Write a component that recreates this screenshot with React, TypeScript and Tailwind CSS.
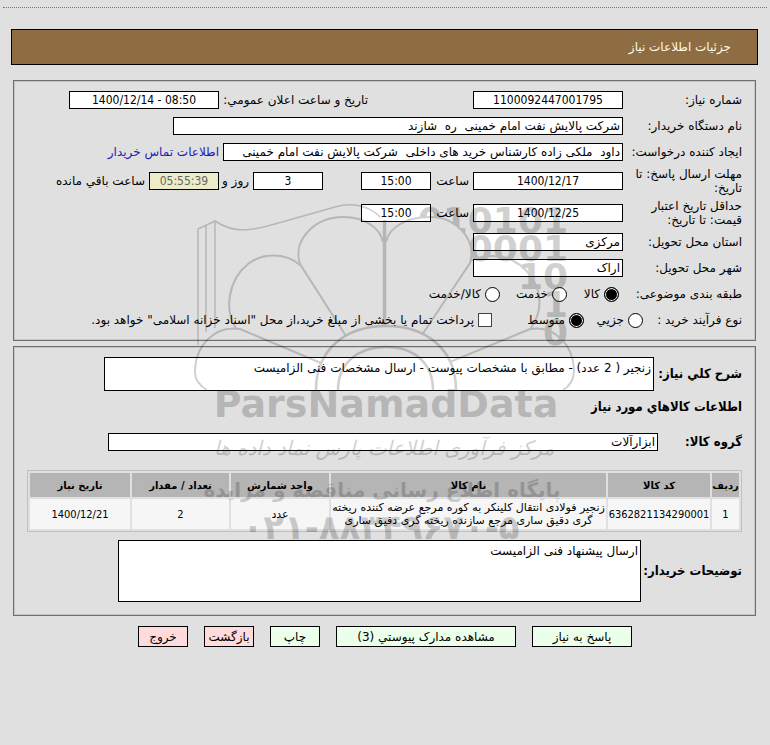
import type { InputHTMLAttributes, ReactNode } from 'react';

const columns = [
  { label: 'ردیف', width: 'w-[27px]' },
  { label: 'کد کالا', width: 'w-[102px]' },
  { label: 'نام کالا', width: '' },
  { label: 'واحد شمارش', width: 'w-[98px]' },
  { label: 'تعداد / مقدار', width: 'w-[97px]' },
  { label: 'تاریخ نیاز', width: 'w-[100px]' },
];

const items = [
  [
    '1',
    '6362821134290001',
    'زنجیر فولادی انتقال کلینکر به کوره مرجع عرضه کننده ریخته گری دقیق ساری مرجع سازنده ریخته گری دقیق ساری',
    'عدد',
    '2',
    '1400/12/21',
  ],
];

const actions = [
  { label: 'پاسخ به نیاز', style: 'w-[100px] bg-[#ebffeb]' },
  { label: 'مشاهده مدارک پیوستي (3)', style: 'w-[180px] bg-[#ebffeb]' },
  { label: 'چاپ', style: 'w-[50px] bg-[#ebffeb]' },
  { label: 'بازگشت', style: 'w-[50px] bg-[#ffdbdb]' },
  { label: 'خروج', style: 'w-[50px] bg-[#ffdbdb]' },
];

const panel = 'ms-[14px] me-[13px] border border-[#6e6e6e] px-[13px] pt-[10px] shadow-[inset_0_0_0_1px_#c6c6c6]';
const strong = "font-['DejaVu_Sans_Condensed','DejaVu_Sans',sans-serif] text-[13px] leading-[14px] font-bold whitespace-nowrap";

function Field({ className = '', ...props }: InputHTMLAttributes<HTMLInputElement>) {
  return (
    <input
      readOnly
      className={`h-[18px] shrink-0 border border-black px-0.5 ${className}`}
      {...props}
    />
  );
}

// Numbers and dates: centred, in the narrower cut
function NumberField({ className = 'w-[70px] bg-white', ...props }: InputHTMLAttributes<HTMLInputElement>) {
  return (
    <Field
      dir="ltr"
      className={`text-center font-['DejaVu_Sans_Condensed','DejaVu_Sans',sans-serif] ${className}`}
      {...props}
    />
  );
}

function Row({ id, label, children, className = 'h-[18px]' }: { id: string; label: string; children: ReactNode; className?: string }) {
  return (
    <div className={`flex items-center ${className}`}>
      <label htmlFor={id} className="w-[119px] shrink-0">{label}</label>
      {children}
    </div>
  );
}

function Radio({ name, label, checked, className }: { name: string; label: string; checked?: boolean; className: string }) {
  return (
    <label className={`flex shrink-0 items-center gap-1 whitespace-nowrap ${className}`}>
      <input
        type="radio"
        name={name}
        defaultChecked={checked}
        className="size-[15px] shrink-0 appearance-none rounded-full border border-black bg-white checked:bg-black checked:shadow-[inset_0_0_0_1px_white]"
      />
      {label}
    </label>
  );
}

function Watermark() {
  return (
    <svg
      viewBox="190 200 390 350"
      className="pointer-events-none absolute top-[200px] left-1/2 h-[350px] w-[390px] -translate-x-1/2 opacity-[0.18]"
      direction="ltr"
      aria-hidden="true"
    >
      <clipPath id="behindPetals">
        <path d="M380 200H580V350H520V285L478 262L470 261C477 238 455 217 430 217C412 217 397 223 390 232L380 225Z" />
      </clipPath>
      <g fill="none" stroke="#000" strokeWidth="2">
        <path d="M198 345V229L215 221M206 332V225M215 328V221C235 234 250 231 275 224L335 207C352 202 370 206 380 217" strokeWidth="1.5" />
        <path d="M346 336L300 264C292 240 315 217 343 217C365 217 380 228 383 242" />
        <path d="M422 335L470 263C477 238 455 217 430 217C405 217 389 228 386 242" />
        <path d="M384.500 220V326" strokeWidth="3.500" />
        <path d="M300 265C285 252 262 253 248 264C228 280 224 310 236 328" />
        <path d="M470 261C495 250 517 258 530 275C543 292 542 312 531 328" />
        <path d="M321 363L240 329C215 325 196 345 195 370C194 380 200 386 207 390" />
        <path d="M450 362L530 329C555 325 573 345 574 370C574 380 570 386 563 390" />
        <path d="M316 390C316 350 345 326 386 326C427 326 456 350 456 390M338 390C338 364 357 347 386 347C415 347 433 364 433 390" strokeWidth="2.500" />
      </g>
      <g fontFamily="DejaVu Sans, sans-serif" fontWeight="bold">
        <g fontSize="36" textAnchor="end" clipPath="url(#behindPetals)">
          <text x="568" y="233">010101</text>
          <text x="568" y="261">0001</text>
          <text x="568" y="289">10</text>
          <text x="568" y="317">1</text>
          <text x="568" y="345">0</text>
        </g>
        <text x="386" y="417" fontSize="38" textAnchor="middle">ParsNamadData</text>
        <g textAnchor="middle" direction="rtl">
          <text x="384" y="455" fontSize="20" fontWeight="normal" fontStyle="italic">مرکز فرآوری اطلاعات پارس نماد داده ها</text>
          <text x="382" y="497" fontSize="20">پایگاه اطلاع رسانی مناقصه و مزایده</text>
        </g>
        <text x="381" y="539" fontSize="34" textAnchor="middle">۰۲۱-۸۸۳۴۹۶۷۰-۵</text>
      </g>
    </svg>
  );
}

export default function App() {
  return (
    <main
      dir="rtl"
      className="relative min-h-screen bg-[#e0e0e0] pt-[7px] font-['DejaVu_Sans',sans-serif] text-[12px] leading-[14px] text-black"
    >
      <div className="mx-[3px] border-t border-dotted border-[#777]" />

      <h1 className="ms-[12px] me-[11px] mt-[21px] flex h-9 items-center border border-black bg-[#8f6d42] px-[26px] text-[#fff8e8]">
        جزئیات اطلاعات نیاز
      </h1>

      <section className={`mt-[15px] pb-[11px] ${panel}`}>
        <div className="flex flex-col gap-2">
          <Row id="need" label="شماره نیاز:">
            <NumberField id="need" defaultValue="1100092447001795" className="w-[150px] bg-white" />
            <label htmlFor="announce" className="ms-[105px] w-[149px] shrink-0 whitespace-nowrap">تاریخ و ساعت اعلان عمومي:</label>
            <NumberField id="announce" defaultValue="1400/12/14 - 08:50" className="w-[150px] bg-white" />
          </Row>
          <Row id="org" label="نام دستگاه خریدار:">
            <Field id="org" defaultValue="شرکت پالایش نفت امام خمینی  ره  شازند" className="w-[450px] bg-white" />
          </Row>
          <Row id="creator" label="ایجاد کننده درخواست:">
            <Field id="creator" defaultValue="داود  ملکی زاده کارشناس خرید های داخلی  شرکت پالایش نفت امام خمینی" className="w-[400px] bg-white" />
            <a href="#contact" className="ms-1 whitespace-nowrap text-[#1a1ab8]">اطلاعات تماس خریدار</a>
          </Row>
          <Row id="deadline" label="مهلت ارسال پاسخ: تا تاریخ:" className="h-6">
            <NumberField id="deadline" defaultValue="1400/12/17" className="w-[150px] bg-white" />
            <label htmlFor="deadlineTime" className="w-[42px] shrink-0 px-1">ساعت</label>
            <NumberField id="deadlineTime" defaultValue="15:00" />
            <div className="w-[38px] shrink-0" />
            <NumberField id="days" defaultValue="3" />
            <label htmlFor="days" className="w-[34px] shrink-0 px-1 whitespace-nowrap">روز و</label>
            <NumberField id="remaining" defaultValue="05:55:39" className="w-[70px] bg-[#ececc8] text-[#666]" />
            <label htmlFor="remaining" className="ms-1 whitespace-nowrap">ساعت باقي مانده</label>
          </Row>
          <Row id="valid" label="حداقل تاریخ اعتبار قیمت: تا تاریخ:" className="h-6">
            <NumberField id="valid" defaultValue="1400/12/25" className="w-[150px] bg-white" />
            <label htmlFor="validTime" className="w-[42px] shrink-0 px-1">ساعت</label>
            <NumberField id="validTime" defaultValue="15:00" />
          </Row>
          <Row id="province" label="استان محل تحویل:">
            <Field id="province" defaultValue="مرکزی" className="w-[150px] bg-white" />
          </Row>
          <Row id="city" label="شهر محل تحویل:">
            <Field id="city" defaultValue="اراک" className="w-[150px] bg-white" />
          </Row>
          <div className="flex h-[18px] items-center" role="radiogroup" aria-labelledby="category">
            <span id="category" className="w-[123px] shrink-0 whitespace-nowrap">طبقه بندی موضوعی:</span>
            <Radio name="category" label="کالا" checked className="w-[52px]" />
            <Radio name="category" label="خدمت" className="w-[67px]" />
            <Radio name="category" label="کالا/خدمت" className="" />
          </div>
          <div className="flex h-[18px] items-center" role="radiogroup" aria-labelledby="process">
            <span id="process" className="w-[99px] shrink-0 whitespace-nowrap">نوع فرآیند خرید :</span>
            <Radio name="process" label="جزیي" className="w-[59px]" />
            <Radio name="process" label="متوسط" checked className="w-[92px]" />
            <label className="flex items-center gap-1 whitespace-nowrap">
              <input type="checkbox" className="size-[14px] shrink-0 appearance-none border border-[#444] bg-white checked:bg-black" />
              پرداخت تمام یا بخشی از مبلغ خرید،از محل "اسناد خزانه اسلامی" خواهد بود.
            </label>
          </div>
        </div>
      </section>

      <section className={`mt-[5px] pb-[13px] ${panel}`}>
        <div className="flex items-center">
          <label htmlFor="summary" className={`w-[88px] shrink-0 ${strong}`}>شرح کلي نیاز:</label>
          <textarea
            id="summary"
            readOnly
            className="h-[34px] w-[550px] resize-none overflow-hidden border border-black bg-white px-0.5 pt-[3px]"
            defaultValue="زنجیر ( 2 عدد) - مطابق با مشخصات پیوست - ارسال مشخصات فنی الزامیست"
          />
        </div>
        <h2 className={`mt-[9px] ${strong}`}>اطلاعات کالاهاي مورد نیاز</h2>
        <div className="mt-[19px] flex items-center">
          <label htmlFor="group" className={`w-[84px] shrink-0 ${strong}`}>گروه کالا:</label>
          <Field id="group" defaultValue="ابزارآلات" className="w-[550px] bg-white" />
        </div>

        <table className="mt-[19px] w-full table-fixed border-separate border-spacing-0.5 border border-[#c0c0c0] text-center text-[11px] leading-[13px]">
          <thead>
            <tr className="h-6 bg-[#b5b5b5]">
              {columns.map(col => (
                <th key={col.label} className={`p-0 text-[10px] whitespace-nowrap ${col.width}`}>{col.label}</th>
              ))}
            </tr>
          </thead>
          <tbody>
            {items.map(row => (
              <tr key={row[0]} className="h-[30px] bg-[#f6f6f6]">
                {row.map((cell, i) => (
                  <td
                    key={i}
                    className={/^[\d/]+$/.test(cell) ? "p-0 font-['DejaVu_Sans_Condensed','DejaVu_Sans',sans-serif]" : 'p-0'}
                  >
                    {cell}
                  </td>
                ))}
              </tr>
            ))}
          </tbody>
        </table>

        <div className="mt-2 flex items-center">
          <label htmlFor="notes" className={`w-[101px] shrink-0 ${strong}`}>توضیحات خریدار:</label>
          <textarea
            id="notes"
            readOnly
            className="h-[62px] w-[523px] resize-none border border-black bg-white px-0.5 pt-[3px]"
            defaultValue="ارسال پیشنهاد فنی الزامیست"
          />
        </div>
      </section>

      <div className="mt-[10px] flex justify-center gap-4">
        {actions.map(action => (
          <button key={action.label} type="button" className={`h-[21px] border border-black whitespace-nowrap ${action.style}`}>
            {action.label}
          </button>
        ))}
      </div>

      <Watermark />
    </main>
  );
}
